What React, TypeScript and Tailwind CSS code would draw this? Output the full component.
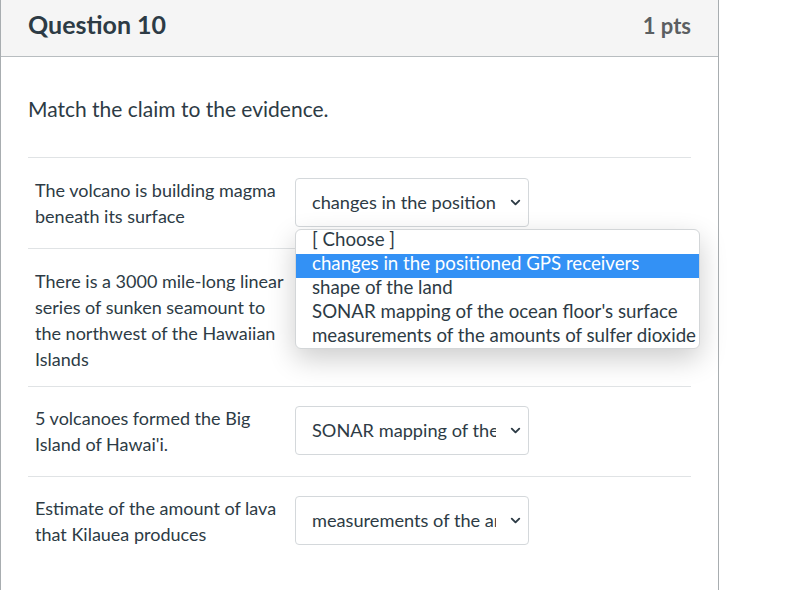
import { ChevronDown } from "lucide-react";

// Canvas-style quiz question, "matching" type, with one select opened
const ROWS = [
  { claim: "The volcano is building magma beneath its surface", answer: "changes in the positioned GPS receivers", pad: "pt-[19px] pb-[19px]" },
  { claim: "There is a 3000 mile-long linear series of sunken seamount to the northwest of the Hawaiian Islands", answer: "", pad: "pt-[19px] pb-[14px]" },
  { claim: "5 volcanoes formed the Big Island of Hawai'i.", answer: "SONAR mapping of the ocean floor's surface", pad: "pt-[18px] pb-[19px]" },
  { claim: "Estimate of the amount of lava that Kilauea produces", answer: "measurements of the amounts of sulfer dioxide", pad: "pt-[18px] pb-[19px]" },
];

const OPTIONS = [
  "[ Choose ]",
  "changes in the positioned GPS receivers",
  "shape of the land",
  "SONAR mapping of the ocean floor's surface",
  "measurements of the amounts of sulfer dioxide",
];

const FakeSelect = ({ value }: { value: string }) => (
  <div className="flex h-[49px] w-[234px] shrink-0 items-center rounded-[4px] border border-[#d4d8db] bg-white pl-[16px] pr-[5px]">
    <span className="w-[184px] overflow-hidden whitespace-nowrap pt-[1px] text-[18.2px] text-[#2d3b45]">{value}</span>
    <ChevronDown className="ml-[12px] h-[15px] w-[15px] text-[#2d3b45]" strokeWidth={3} />
  </div>
);

export default function App() {
  return (
    <div className="h-[602px] w-[795px] bg-white font-['Lato',sans-serif]">
      <div className="relative h-[590px] w-[719px] border-x border-[#a8adb0]">
        <div className="flex h-[57px] items-center justify-between border-b border-[#b8bdc0] bg-[#f5f5f5] pl-[27px] pr-[27px] pb-[6px]">
          <h2 className="text-[25px] font-bold text-[#2d3b45]">Question 10</h2>
          <span className="text-[22px] font-bold text-[#5b5f62]">1 pts</span>
        </div>

        <div className="px-[27px] pt-[36px]">
          <p className="text-[21px] text-[#2d3b45]">Match the claim to the evidence.</p>

          <div className="mt-[32px] w-[663px] border-t border-[#e0e3e5]">
            {ROWS.map((row, i) => (
              <div
                key={i}
                className={`flex items-center border-b border-[#e0e3e5] pl-[7px] ${row.pad} ${i === ROWS.length - 1 ? "border-b-0" : ""}`}
              >
                <div className="w-[260px] pr-[6px] text-[18px] leading-[26px] text-[#2d3b45]">{row.claim}</div>
                {row.answer ? <FakeSelect value={row.answer} /> : <div className="h-[49px]" />}
              </div>
            ))}
          </div>
        </div>

        {/* open dropdown list of the first select */}
        <div className="absolute left-[294px] top-[229px] h-[120px] w-[405px] overflow-hidden rounded-[6px] border border-[#d3d6d8] bg-white shadow-[0_10px_28px_rgba(0,0,0,0.2)]">
          {OPTIONS.map((opt, i) => (
            <div
              key={opt}
              className={`h-[24px] whitespace-nowrap pl-[16px] text-[18.7px] leading-[19px] ${
                i === 1 ? "bg-[#3391f5] text-white" : "text-[#2d3b45]"
              }`}
            >
              {opt}
            </div>
          ))}
        </div>
      </div>
    </div>
  );
}
